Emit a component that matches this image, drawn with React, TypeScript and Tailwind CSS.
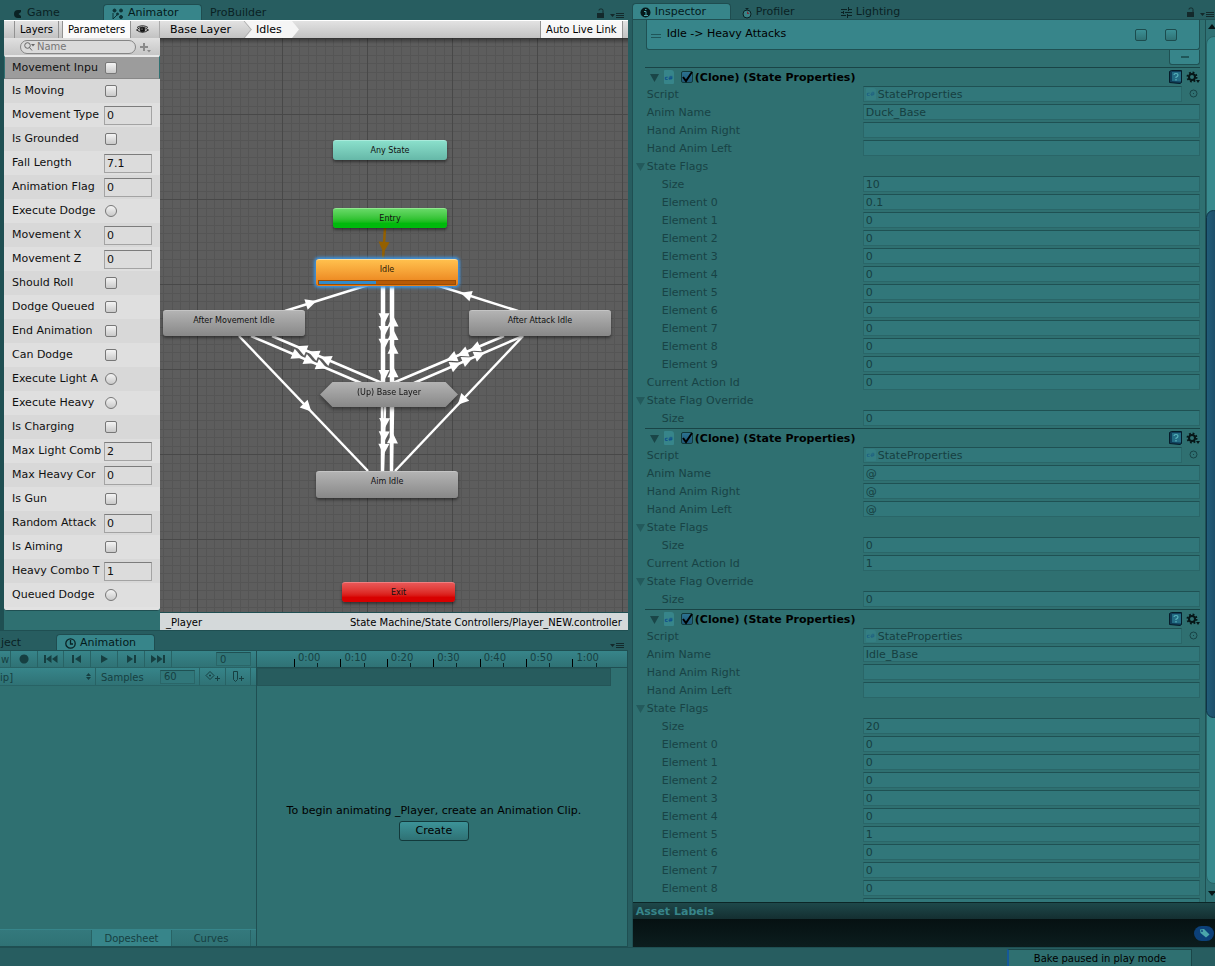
import { useState, type ReactNode } from 'react';

type ParamKind = 'bool' | 'trigger' | 'number';

interface Param {
    name: string;
    kind: ParamKind;
    value?: string;
}

interface PropertyRow {
    label: string;
    value?: string;
    depth?: number;
    foldout?: boolean;
    script?: boolean;
}

interface LinkProps {
    from: [number, number];
    to: [number, number];
    tips: number[];
    color?: string;
}

const params: Param[] = [
    { name: 'Movement Inpu', kind: 'bool' },
    { name: 'Is Moving', kind: 'bool' },
    { name: 'Movement Type', kind: 'number', value: '0' },
    { name: 'Is Grounded', kind: 'bool' },
    { name: 'Fall Length', kind: 'number', value: '7.1' },
    { name: 'Animation Flag', kind: 'number', value: '0' },
    { name: 'Execute Dodge', kind: 'trigger' },
    { name: 'Movement X', kind: 'number', value: '0' },
    { name: 'Movement Z', kind: 'number', value: '0' },
    { name: 'Should Roll', kind: 'bool' },
    { name: 'Dodge Queued', kind: 'bool' },
    { name: 'End Animation', kind: 'bool' },
    { name: 'Can Dodge', kind: 'bool' },
    { name: 'Execute Light A', kind: 'trigger' },
    { name: 'Execute Heavy', kind: 'trigger' },
    { name: 'Is Charging', kind: 'bool' },
    { name: 'Max Light Comb', kind: 'number', value: '2' },
    { name: 'Max Heavy Cor', kind: 'number', value: '0' },
    { name: 'Is Gun', kind: 'bool' },
    { name: 'Random Attack', kind: 'number', value: '0' },
    { name: 'Is Aiming', kind: 'bool' },
    { name: 'Heavy Combo T', kind: 'number', value: '1' },
    { name: 'Queued Dodge', kind: 'trigger' },
];

const element = (value: string, i: number): PropertyRow => ({ label: `Element ${i}`, value, depth: 1 });

const header = (anim: string, right: string, left: string, size: string): PropertyRow[] => [
    { label: 'Script', value: 'StateProperties', script: true },
    { label: 'Anim Name', value: anim },
    { label: 'Hand Anim Right', value: right },
    { label: 'Hand Anim Left', value: left },
    { label: 'State Flags', foldout: true },
    { label: 'Size', value: size, depth: 1 },
];

const tail = (actionId: string): PropertyRow[] => [
    { label: 'Current Action Id', value: actionId },
    { label: 'State Flag Override', foldout: true },
    { label: 'Size', value: '0', depth: 1 },
];

const sections = [
    [...header('Duck_Base', '', '', '10'), ...['0.1', '0', '0', '0', '0', '0', '0', '0', '0', '0'].map(element), ...tail('0')],
    [...header('@', '@', '@', '0'), ...tail('1')],
    [...header('Idle_Base', '', '', '20'), ...['0', '0', '0', '0', '0', '1', '0', '0', '0'].map(element), { label: '', value: '', depth: 1 }],
];

function LockMenu() {
    return (
        <svg width="28" height="12" viewBox="0 0 28 12" className="text-[#13292b]" fill="currentColor">
            <path d="M0 5h7v5H0z" />
            <path d="M2 2.500V2q0-1 1.500-1h1Q6 1 6 2.500V5" fill="none" stroke="currentColor" />
            <path d="M13 6h5l-2.500 3zM19 5h8v1h-8zM19 7h8v1h-8zM19 9h8v1h-8z" />
        </svg>
    );
}

function MenuIcon() {
    return (
        <svg width="15" height="8" viewBox="0 0 15 8" className="text-[#13292b]" fill="currentColor">
            <path d="M0 2h5L2.500 5zM6 1h8v1H6zM6 3h8v1H6zM6 5h8v1H6z" />
        </svg>
    );
}

function DockTab({ active, className = '', children }: { active?: boolean; className?: string; children: ReactNode }) {
    return (
        <button
            className={`flex h-4 items-center gap-1 whitespace-nowrap border-x border-t pt-[2px] ${active ? 'rounded-t-sm border-[#1f4d50] bg-[#37858a] text-[#041a1b]' : 'border-transparent text-[#0a2224]'} ${className}`}
        >
            {children}
        </button>
    );
}

function ParamRow({ param, index }: { param: Param; index: number }) {
    const id = `param-${index}`;
    const selected = 'border border-x-[#2f7071] border-b-[#888888] border-t-2 border-t-[#e8e8e8] bg-[#9c9c9c] pl-[7px]';
    const plain = index % 2 ? 'bg-[#d8d8d8] pl-2' : 'bg-[#dfdfdf] pl-2';
    return (
        <li className={`flex h-6 items-center ${index === 0 ? selected : plain}`}>
            <label htmlFor={id} className="w-[89px] shrink-0 overflow-hidden whitespace-nowrap pt-px">
                {param.name}
            </label>
            {param.kind === 'number' ? (
                <input
                    id={id}
                    defaultValue={param.value}
                    className="ml-[3px] mt-px h-[19px] w-12 border border-[#a3a3a3] border-t-[#7c7c7c] bg-[#dcdcdc] px-[2px] outline-none"
                />
            ) : (
                <input
                    id={id}
                    type={param.kind === 'bool' ? 'checkbox' : 'radio'}
                    className={`ml-1 h-3 w-3 appearance-none border border-[#777777] bg-linear-to-b from-[#f4f4f4] to-[#c9c9c9] ${param.kind === 'bool' ? 'rounded-[2px]' : 'rounded-full'}`}
                />
            )}
        </li>
    );
}

// Transition line, tips are fractions along its length
function Link({ from, to, tips, color = '#ffffff' }: LinkProps) {
    const dx = to[0] - from[0];
    const dy = to[1] - from[1];
    const angle = (Math.atan2(dy, dx) * 180) / Math.PI;
    return (
        <g stroke={color} fill={color}>
            <line x1={from[0]} y1={from[1]} x2={to[0]} y2={to[1]} strokeWidth="2.5" />
            {tips.map((t) => (
                <path
                    key={t}
                    d="M0 0L-11 -5.500V5.500Z"
                    stroke="none"
                    transform={`translate(${from[0] + dx * t} ${from[1] + dy * t}) rotate(${angle})`}
                />
            ))}
        </g>
    );
}

function Grid() {
    const steps = [1, 2, 3, 4, 5, 6, 7, 8, 9].map((i) => Math.round(i * 8.5) + 0.5);
    return (
        <svg className="absolute inset-0 h-full w-full">
            <defs>
                <pattern id="grid" x="37" y="76" width="85" height="85" patternUnits="userSpaceOnUse">
                    {steps.map((s) => (
                        <path key={s} d={`M${s} 0V85M0 ${s}H85`} stroke="#555555" />
                    ))}
                    <path d="M0.500 0V85M0 0.500H85" stroke="#484848" />
                </pattern>
            </defs>
            <rect width="100%" height="100%" fill="url(#grid)" />
        </svg>
    );
}

function StateGraph() {
    const node = 'absolute flex justify-center rounded-[3px] text-[8px] leading-5 text-[#101010] shadow-[0_2px_3px_rgba(0,0,0,0.45)]';
    const grey = 'border-t border-[#c4c4c4] bg-linear-to-b from-[#b3b3b3] to-[#888888]';
    return (
        <div className="relative min-w-0 flex-1 overflow-hidden bg-[#5d5d5d]">
            <Grid />
            <div className="pointer-events-none absolute inset-x-0 top-0 h-[6px] bg-linear-to-b from-black/40 to-transparent" />
            <svg className="absolute inset-0 h-full w-full">
                <Link from={[225, 190]} to={[223, 221]} tips={[0.8]} color="#946000" />
                <Link from={[125, 273]} to={[208, 247]} tips={[0.38]} />
                <Link from={[358, 273]} to={[276, 247]} tips={[0.7]} />
                <Link from={[224, 247]} to={[224, 345]} tips={[0.4, 0.53, 0.66, 0.98]} />
                <Link from={[222, 247]} to={[222, 434]} tips={[]} />
                <Link from={[231, 434]} to={[231, 247]} tips={[]} />
                <Link from={[233, 345]} to={[233, 247]} tips={[0.17, 0.41, 0.55, 0.69]} />
                <Link from={[225, 368]} to={[223, 434]} tips={[0.35, 0.55, 0.74]} />
                <Link from={[232, 434]} to={[233, 368]} tips={[0.6]} />
                <Link from={[79, 298]} to={[208, 433]} tips={[0.56]} />
                <Link from={[91, 298]} to={[201, 345]} tips={[0.47, 0.58, 0.69]} />
                <Link from={[222, 345]} to={[112, 298]} tips={[0.56, 0.67, 0.78]} />
                <Link from={[344, 298]} to={[233, 345]} tips={[0.31, 0.42, 0.52]} />
                <Link from={[254, 345]} to={[363, 298]} tips={[0.43, 0.54, 0.65]} />
                <Link from={[363, 298]} to={[235, 433]} tips={[0.51]} />
            </svg>
            <button className={`${node} left-[173px] top-[102px] h-5 w-[114px] border-t border-[#a9eadb] bg-linear-to-b from-[#8adfcb] to-[#66b8a8]`}>Any State</button>
            <button className={`${node} left-[173px] top-[170px] h-5 w-[114px] border-t border-[#90e890] bg-linear-to-b from-[#66d966] to-[#00ba0c] to-75%`}>Entry</button>
            <button className="absolute left-[156px] top-[221px] flex h-[27px] w-[142px] flex-col rounded-[3px] border-t border-[#ffe0a0] bg-linear-to-b from-[#ffc04d] to-[#e87d12] px-[2px] text-[8px] text-[#2c1b05] shadow-[0_0_3px_2px_#3d91dc]">
                <span className="w-full leading-5">Idle</span>
                <span className="flex h-[5px] w-full border border-[#9c4c04] bg-[#b85a06]">
                    <span className="w-[42%] bg-[#338bcb]" />
                </span>
            </button>
            <button className={`${node} ${grey} left-[3px] top-[272px] h-[26px] w-[142px]`}>After Movement Idle</button>
            <button className={`${node} ${grey} left-[309px] top-[272px] h-[26px] w-[142px]`}>After Attack Idle</button>
            <div className="absolute left-[160px] top-[344px] drop-shadow-[0_2px_2px_rgba(0,0,0,0.45)]">
                <button className="flex h-[25px] w-[138px] justify-center bg-linear-to-b from-[#b3b3b3] to-[#888888] text-[8px] leading-[22px] text-[#101010] [clip-path:polygon(9%_0,91%_0,100%_50%,91%_100%,9%_100%,0_50%)]">
                    (Up) Base Layer
                </button>
            </div>
            <button className={`${node} ${grey} left-[156px] top-[433px] h-[27px] w-[142px]`}>Aim Idle</button>
            <button className={`${node} left-[182px] top-[544px] h-5 w-[113px] border-t border-[#f08080] bg-linear-to-b from-[#e95656] to-[#d80000] to-75%`}>Exit</button>
        </div>
    );
}

function AnimatorPanel() {
    return (
        <section className="flex flex-col border-l-4 border-[#1f4f52]">
            <div className="flex h-[18px] shrink-0 items-stretch border-t border-white bg-linear-to-b from-[#e2e2e2] to-[#c2c2c2] text-[10px] text-black">
                <button className="ml-[10px] w-[45px] border-x border-[#929292]">Layers</button>
                <button className="ml-[3px] w-[69px] border-x border-[#929292] bg-white/90">Parameters</button>
                <button className="flex w-[22px] items-center justify-center" aria-label="Toggle visibility">
                    <svg width="13" height="10" fill="none" stroke="#222222">
                        <path d="M0.500 5Q6 -0.500 12.500 5Q6.500 9.500 0.500 5Z" fill="#bbbbbb" />
                        <path d="M1 2.500Q6.500 -1 12 2.500" />
                        <circle cx="6.500" cy="4.500" r="2.300" fill="#111111" />
                        <circle cx="6" cy="4" r="0.600" fill="#dddddd" stroke="none" />
                    </svg>
                </button>
                <nav className="ml-[6px] flex flex-1 items-center border-l border-[#aaaaaa] text-[11px]">
                    <a href="#base" className="pl-[10px] pt-px">Base Layer</a>
                    <svg width="12" height="17" className="ml-[10px] shrink-0">
                        <path d="M4 0H12V17H4L11 8.500Z" fill="#f5f5f5" />
                        <path d="M3 0L10 8.500L3 17" fill="none" stroke="#b0b0b0" />
                    </svg>
                    <a href="#idles" className="h-full bg-[#f5f5f5] pl-[3px] leading-[18px]">Idles</a>
                    <svg width="18" height="17" className="shrink-0">
                        <path d="M0 0H10L17 8.500L10 17H0Z" fill="#f5f5f5" />
                    </svg>
                </nav>
                <button className="mr-[5px] w-[83px] whitespace-nowrap border-x border-[#929292] bg-white/80">Auto Live Link</button>
            </div>
            <div className="flex">
                <div className="flex w-[156px] shrink-0 flex-col bg-[#2f7071]">
                    <div className="flex h-[17px] shrink-0 items-center bg-linear-to-b from-[#e0e0e0] to-[#c6c6c6]">
                        <div className="ml-4 flex h-[14px] w-[116px] items-center rounded-full border border-[#858585] bg-[#dadada] pl-[3px]">
                            <svg width="13" height="9" viewBox="0 0 13 9" fill="none" stroke="#666666">
                                <circle cx="3.500" cy="3.500" r="2.800" />
                                <path d="M5.500 5.500L8 8.500" />
                                <path d="M7 2h4L9 4.500z" fill="#666666" stroke="none" />
                            </svg>
                            <input aria-label="Search parameters" placeholder="Name" className="w-20 min-w-0 text-[10px] leading-3 outline-none placeholder:text-[#757575]" />
                        </div>
                        <button className="ml-1 mt-[2px]" aria-label="Add parameter">
                            <svg width="11" height="11" fill="#8a8a8a">
                                <path d="M3 1h2v3h3v2H5v3H3V6H0V4h3zM7 8h4L9 10.500z" />
                            </svg>
                        </button>
                    </div>
                    <ul className="rounded-b-[3px] border-b border-[#1f4f52] bg-[#e2e2e2] pb-[3px] text-[11px] text-[#101010]">
                        {params.map((param, i) => (
                            <ParamRow key={param.name} param={param} index={i} />
                        ))}
                    </ul>
                    <div className="h-[19px]" />
                </div>
                <div className="flex min-w-0 flex-1 flex-col">
                    <StateGraph />
                    <footer className="flex h-[18px] shrink-0 items-center justify-between border-t border-[#1f4f52] bg-[#d4d9da] px-[6px] pt-[3px] text-[10px] leading-3 text-black">
                        <span>_Player</span>
                        <span>State Machine/State Controllers/Player_NEW.controller</span>
                    </footer>
                </div>
            </div>
        </section>
    );
}

const transport = [
    { label: 'Record', width: 'w-[27px]', path: 'M7 0.500a4.500 4.500 0 1 0 .1 0z' },
    { label: 'First key', width: 'w-[26px]', path: 'M0 1h2v8H0zM7.500 1v8L2 5zM13.500 1v8L8 5z' },
    { label: 'Previous key', width: 'w-[27px]', path: 'M2 1h2v8H2zM11 1v8L5 5z' },
    { label: 'Play', width: 'w-[27px]', path: 'M4 1l7 4-7 4z' },
    { label: 'Next key', width: 'w-[27px]', path: 'M3 1l6 4-6 4zM10 1h2v8h-2z' },
    { label: 'Last key', width: 'w-[27px]', path: 'M0 1l5.500 4L0 9zM6 1l5.500 4L6 9zM12 1h2v8h-2z' },
];

function AnimationPanel() {
    const [view, setView] = useState('Dopesheet');
    const field = 'border border-[#2a6668] border-t-[#1f5153] bg-[#31777a] px-[3px] text-[#163f41] outline-none';
    return (
        <section className="flex min-h-0 flex-1 border-y border-r border-[#1f4f52] bg-[#2f7071] text-[#163f41]">
            <div className="flex w-[257px] shrink-0 flex-col border-r border-[#1f4f52]">
                <div className="flex h-[17px] shrink-0 items-stretch border-b border-[#286365] bg-linear-to-b from-[#37858a] to-[#2f7275] text-[10px]">
                    <button className="w-[10px]">w</button>
                    {transport.map((item) => (
                        <button key={item.label} aria-label={item.label} className={`flex items-center justify-center border-l border-[#286365] ${item.width}`}>
                            <svg width="14" height="10" fill="currentColor">
                                <path d={item.path} />
                            </svg>
                        </button>
                    ))}
                    <div className="flex flex-1 items-center justify-end border-l border-[#286365] pr-[5px]">
                        <input aria-label="Frame" defaultValue="0" className={`h-[14px] w-[35px] ${field}`} />
                    </div>
                </div>
                <div className="flex h-[18px] shrink-0 items-center border-b border-[#286365] bg-linear-to-b from-[#37858a] to-[#2f7275] text-[10px]">
                    <div className="flex h-full w-[96px] items-center border-r border-[#286365] pr-[3px]">
                        <select aria-label="Clip" className="w-full appearance-none pt-px outline-none">
                            <option>ip]</option>
                        </select>
                        <svg width="6" height="7" fill="currentColor" className="shrink-0">
                            <path d="M0 3h5L2.500 0zM0 4h5L2.500 7z" />
                        </svg>
                    </div>
                    <label htmlFor="samples" className="w-16 pl-[5px] pt-px">Samples</label>
                    <input id="samples" defaultValue="60" className={`h-[14px] w-[35px] ${field}`} />
                    <button aria-label="Add keyframe" className="ml-1 flex h-full w-[26px] items-center justify-center border-l border-[#286365]">
                        <svg width="15" height="13" fill="none" stroke="currentColor">
                            <path d="M5 1.500L9 5.500L5 9.500L1 5.500ZM5 4.500v2M4 5.500h2M12.500 6v5M10 8.500h5" />
                        </svg>
                    </button>
                    <button aria-label="Add event" className="flex h-full w-[26px] items-center justify-center border-x border-[#286365]">
                        <svg width="13" height="13" fill="none" stroke="currentColor">
                            <path d="M1.500 1.500h4v8l-2 2l-2-2zM9.500 6v5M7 8.500h5" />
                        </svg>
                    </button>
                </div>
                <div className="flex-1" />
                <div className="flex h-[17px] shrink-0 justify-end border-t border-[#37858a] bg-linear-to-b from-[#34797d] to-[#2f7275] pr-[5px] text-[10px]">
                    {['Dopesheet', 'Curves'].map((name) => (
                        <button
                            key={name}
                            onClick={() => setView(name)}
                            className={`w-20 border-l border-[#286365] last:border-r ${view === name ? 'bg-[#37858a]' : ''}`}
                        >
                            {name}
                        </button>
                    ))}
                </div>
            </div>
            <div className="flex min-w-0 flex-1 flex-col">
                <div className="flex h-[17px] shrink-0 items-end border-b border-[#1f4f52] bg-linear-to-b from-[#37858a] to-[#2f7275] pl-[37px] pr-2 text-[10px]">
                    {['0:00', '0:10', '0:20', '0:30', '0:40', '0:50', '1:00'].map((time) => (
                        <div key={time} className="flex h-full min-w-0 flex-1 items-end">
                            <div className="flex h-full w-1/2 items-end">
                                <span className="h-2 w-px shrink-0 bg-black" />
                                <span className="ml-[3px] self-start leading-[14px]">{time}</span>
                            </div>
                            <span className="h-1 w-px bg-[#0a2224]" />
                        </div>
                    ))}
                </div>
                <div className="mr-4 h-[18px] shrink-0 border border-[#245557] bg-[#275c5e]" />
                <div className="mr-4 flex flex-1 flex-col items-center justify-center pt-3 text-[11px] text-black">
                    <p className="mb-[2px] leading-4">To begin animating _Player, create an Animation Clip.</p>
                    <button className="h-5 w-[70px] rounded-[3px] border border-[#12393b] bg-linear-to-b from-[#3c9398] to-[#2f7275]">Create</button>
                </div>
            </div>
        </section>
    );
}

function ScriptIcon({ faded }: { faded?: boolean }) {
    return (
        <span className={`flex w-[10px] shrink-0 items-center justify-center rounded-[1px] rounded-tr-[3px] bg-[#37858a] text-[6px] font-bold text-[#10508a] ${faded ? 'h-3 opacity-50' : 'h-[14px]'}`}>
            c#
        </span>
    );
}

function Foldout({ className }: { className: string }) {
    return (
        <svg width="9" height="8" className={className} fill="currentColor">
            <path d="M0 0h9L4.500 8z" />
        </svg>
    );
}

function StateProperties({ rows, index }: { rows: PropertyRow[]; index: number }) {
    const [enabled, setEnabled] = useState(true);
    const field = 'h-4 min-w-0 flex-1 border border-[#2a6668] border-t-[#1f5153] bg-[#31777a] px-[2px] text-[#163f41] outline-none';
    return (
        <div>
            <header className="ml-3 flex h-[19px] items-center border-t border-[#194446] pl-[5px]">
                <Foldout className="mt-[2px] shrink-0 text-[#1a4648]" />
                <span className="ml-[5px] flex"><ScriptIcon /></span>
                <label className="flex items-center text-[11px] font-bold text-black">
                    <span className="relative ml-[7px] mr-[2px] h-3 w-3">
                        <input
                            type="checkbox"
                            checked={enabled}
                            onChange={(e) => setEnabled(e.target.checked)}
                            className="block h-3 w-3 appearance-none rounded-[2px] border border-[#12393b] bg-linear-to-b from-[#2c7290] to-[#1f5878]"
                        />
                        {enabled && (
                            <svg width="12" height="12" className="pointer-events-none absolute inset-0" fill="none" stroke="black" strokeWidth="2">
                                <path d="M2 6l3 4 6-9" />
                            </svg>
                        )}
                    </span>
                    <span className="pt-[2px]">(Clone) (State Properties)</span>
                </label>
                <div className="ml-auto flex items-center gap-1">
                    <button aria-label="Help">
                        <svg width="13" height="14">
                            <path d="M0.500 1.500L2.500 0.500H12.500V12.500L11 13.500L0.500 12.500Z" fill="#103d58" stroke="#061d2a" />
                            <path d="M3 2H12V11.500L3 11Z" fill="#236c84" />
                            <path d="M5 5Q5 3.500 7 3.500T9 5T7 7.200V8M7 9v1.500" fill="none" stroke="#59b3bb" strokeWidth="1.200" />
                        </svg>
                    </button>
                    <button aria-label="Settings">
                        <svg width="14" height="13" fill="none" stroke="#061617">
                            <circle cx="6" cy="6" r="3" strokeWidth="2" />
                            <circle cx="6" cy="6" r="4.500" strokeWidth="2" strokeDasharray="1.770 1.770" />
                            <path d="M10 9h4l-2 3z" fill="#061617" stroke="none" />
                        </svg>
                    </button>
                </div>
            </header>
            {rows.map((row, i) => {
                const id = `prop-${index}-${i}`;
                return (
                    <div key={id} className="flex h-[18px] items-start text-[11px] leading-[18px] text-[#184345]">
                        <div className={`flex w-[230px] shrink-0 items-center ${row.depth ? 'pl-[29px]' : row.foldout ? 'pl-[3px]' : 'pl-[14px]'}`}>
                            {row.foldout && <Foldout className="mr-[2px] text-[#235a5c]" />}
                            {row.foldout ? <span>{row.label}</span> : <label htmlFor={id}>{row.label}</label>}
                        </div>
                        {row.script ? (
                            <>
                                <div className={`flex items-center gap-[2px] ${field}`}>
                                    <ScriptIcon faded />
                                    <input id={id} readOnly value={row.value} className="h-[14px] min-w-0 flex-1 pt-px leading-[13px] outline-none" />
                                </div>
                                <button aria-label="Pick script" className="ml-[7px] mr-[2px] mt-[3px]">
                                    <svg width="9" height="9" fill="none" stroke="currentColor">
                                        <circle cx="4.500" cy="4.500" r="3.500" />
                                        <path d="M4 4.500h1" />
                                    </svg>
                                </button>
                            </>
                        ) : (
                            !row.foldout && <input id={id} defaultValue={row.value} className={`pt-px leading-[13px] ${field}`} />
                        )}
                    </div>
                );
            })}
        </div>
    );
}

function InspectorPanel() {
    const box = 'h-3 w-3 appearance-none rounded-[2px] border border-[#1c4c4e] bg-linear-to-b from-[#3c9095] to-[#2f7275]';
    return (
        <section className="flex min-h-0 flex-1 flex-col border-l border-[#1f4f52] bg-[#2f7071]">
            <div className="flex min-h-0 flex-1 border-t border-[#1f4f52]">
                <div className="min-w-0 flex-1 overflow-hidden pr-[5px]">
                    <div className="ml-[13px] flex h-[30px] items-center rounded-b-[3px] border border-t-0 border-[#1f5153] bg-[#37858a] pl-[4px] text-[11px] text-black">
                        <span className="mr-[6px] mt-[2px] h-1 w-[10px] border-y border-[#1f5659]" />
                        <span>Idle -&gt; Heavy Attacks</span>
                        <input type="checkbox" aria-label="Solo" className={`ml-auto ${box}`} />
                        <input type="checkbox" aria-label="Mute" className={`ml-[18px] mr-[22px] ${box}`} />
                    </div>
                    <button aria-label="Remove transition" className="ml-auto flex h-[15px] w-[31px] items-center justify-center rounded-b-[3px] border border-t-0 border-[#1f5153] bg-[#37858a]">
                        <span className="h-[2px] w-2 bg-[#1f5659]" />
                    </button>
                    <div className="h-[2px]" />
                    {sections.map((rows, i) => (
                        <StateProperties key={i} rows={rows} index={i} />
                    ))}
                </div>
                <div className="flex w-[10px] shrink-0 flex-col overflow-hidden border-l border-[#1f5153] bg-[#2f7275]">
                    <svg width="9" height="16" className="shrink-0" fill="#061617">
                        <path d="M2 9h8L6 4z" />
                    </svg>
                    <div className="flex w-4 flex-1 flex-col rounded-full border border-[#286365] bg-[#388a8e]">
                        <div className="basis-[20.500%]" />
                        <div className="-ml-px basis-[60%] rounded-full border border-[#0e3346] bg-linear-to-r from-[#215c78] to-[#1a4760]" />
                    </div>
                    <svg width="9" height="18" className="shrink-0" fill="#061617">
                        <path d="M2 7h8L6 12z" />
                    </svg>
                </div>
            </div>
            <h2 className="h-[17px] shrink-0 border-t border-[#0c2627] bg-linear-to-b from-[#1e484a] to-[#142f31] pl-[3px] text-[11px] font-bold leading-[18px] text-[#37858a]">Asset Labels</h2>
            <div className="flex h-[28px] shrink-0 items-center justify-end bg-linear-to-b from-[#061112] to-[#0c1d1e] pr-px">
                <button aria-label="Edit labels" className="flex h-[15px] w-5 items-center justify-center rounded-full bg-[#0c4078]">
                    <svg width="11" height="10">
                        <path d="M1 1.500L5 1L10.500 6.500L7 9.500L1.500 5Z" fill="#4aa5aa" />
                        <circle cx="3" cy="3" r="0.900" fill="#0c4078" />
                    </svg>
                </button>
            </div>
        </section>
    );
}

export default function App() {
    return (
        <div className="flex h-screen flex-col overflow-hidden bg-[#275d60] font-['DejaVu_Sans',sans-serif]">
            <div className="flex min-h-0 flex-1">
                <div className="flex w-[52%] shrink-0 flex-col pr-1">
                    <div className="flex h-5 shrink-0 items-end text-[11px]">
                        <DockTab className="w-[103px] pl-3">
                            <svg width="10" height="10" fill="#0a2224">
                                <path d="M5 1h3v2L5.500 5L8 7v2H5A4 4 0 0 1 5 1z" />
                            </svg>
                            Game
                        </DockTab>
                        <DockTab active className="w-[99px] pl-2">
                            <svg width="12" height="12" fill="#0d3436" stroke="#0d3436">
                                <circle cx="2.500" cy="2.500" r="1.500" />
                                <circle cx="9" cy="2.500" r="1.500" />
                                <circle cx="9" cy="9" r="1.500" />
                                <circle cx="5.500" cy="6" r="1" />
                                <path d="M1 5v6l4-4" fill="none" />
                            </svg>
                            Animator
                        </DockTab>
                        <DockTab className="pl-[7px]">ProBuilder</DockTab>
                        <div className="ml-auto mr-[3px]"><LockMenu /></div>
                    </div>
                    <AnimatorPanel />
                    <div className="flex h-5 shrink-0 items-end border-t border-[#1f4f52] text-[11px]">
                        <DockTab className="w-14">ject</DockTab>
                        <DockTab active className="w-[99px] pl-2">
                            <svg width="11" height="11" fill="none" stroke="#0a2224" strokeWidth="1.300">
                                <circle cx="5.500" cy="5.500" r="4.700" />
                                <path d="M5.500 2v4H8" />
                            </svg>
                            Animation
                        </DockTab>
                        <div className="ml-auto mr-[3px]"><MenuIcon /></div>
                    </div>
                    <AnimationPanel />
                </div>
                <div className="flex min-w-0 flex-1 flex-col">
                    <div className="flex h-[19px] shrink-0 items-end text-[11px]">
                        <DockTab active className="w-[99px] pl-[7px]">
                            <svg width="11" height="11">
                                <circle cx="5.500" cy="5.500" r="5" fill="#06191a" />
                                <path d="M4 4.500h2v4M4 8.500h4M5 2.500h1.500" stroke="#4aa5aa" fill="none" />
                            </svg>
                            Inspector
                        </DockTab>
                        <DockTab className="w-[98px] pl-[10px]">
                            <svg width="10" height="12" fill="none" stroke="#0a2224">
                                <circle cx="5" cy="7" r="4" fill="#3a8286" />
                                <path d="M3.500 1.500h3M5 1v2" />
                                <path d="M5 7V4L7.500 7z" fill="#7c2935" stroke="none" />
                            </svg>
                            Profiler
                        </DockTab>
                        <DockTab className="pl-[11px]">
                            <svg width="11" height="11" fill="none" stroke="#0a2224">
                                <path d="M0 2.500h6M8 2.500h3M0 5.500h2M4 5.500h7M0 8.500h5M7 8.500h4M7.500 0v4M2.500 4v3M6.500 7v4" />
                            </svg>
                            Lighting
                        </DockTab>
                        <div className="ml-auto"><LockMenu /></div>
                    </div>
                    <InspectorPanel />
                </div>
            </div>
            <footer className="flex h-[19px] shrink-0 items-end justify-end border-t border-[#1f4f52] pr-[23px] text-[10px]">
                <button className="h-[17px] w-[185px] border border-b-0 border-l-2 border-[#1a4648] border-l-[#15589a] bg-[#2f7071] text-black">Bake paused in play mode</button>
            </footer>
        </div>
    );
}
